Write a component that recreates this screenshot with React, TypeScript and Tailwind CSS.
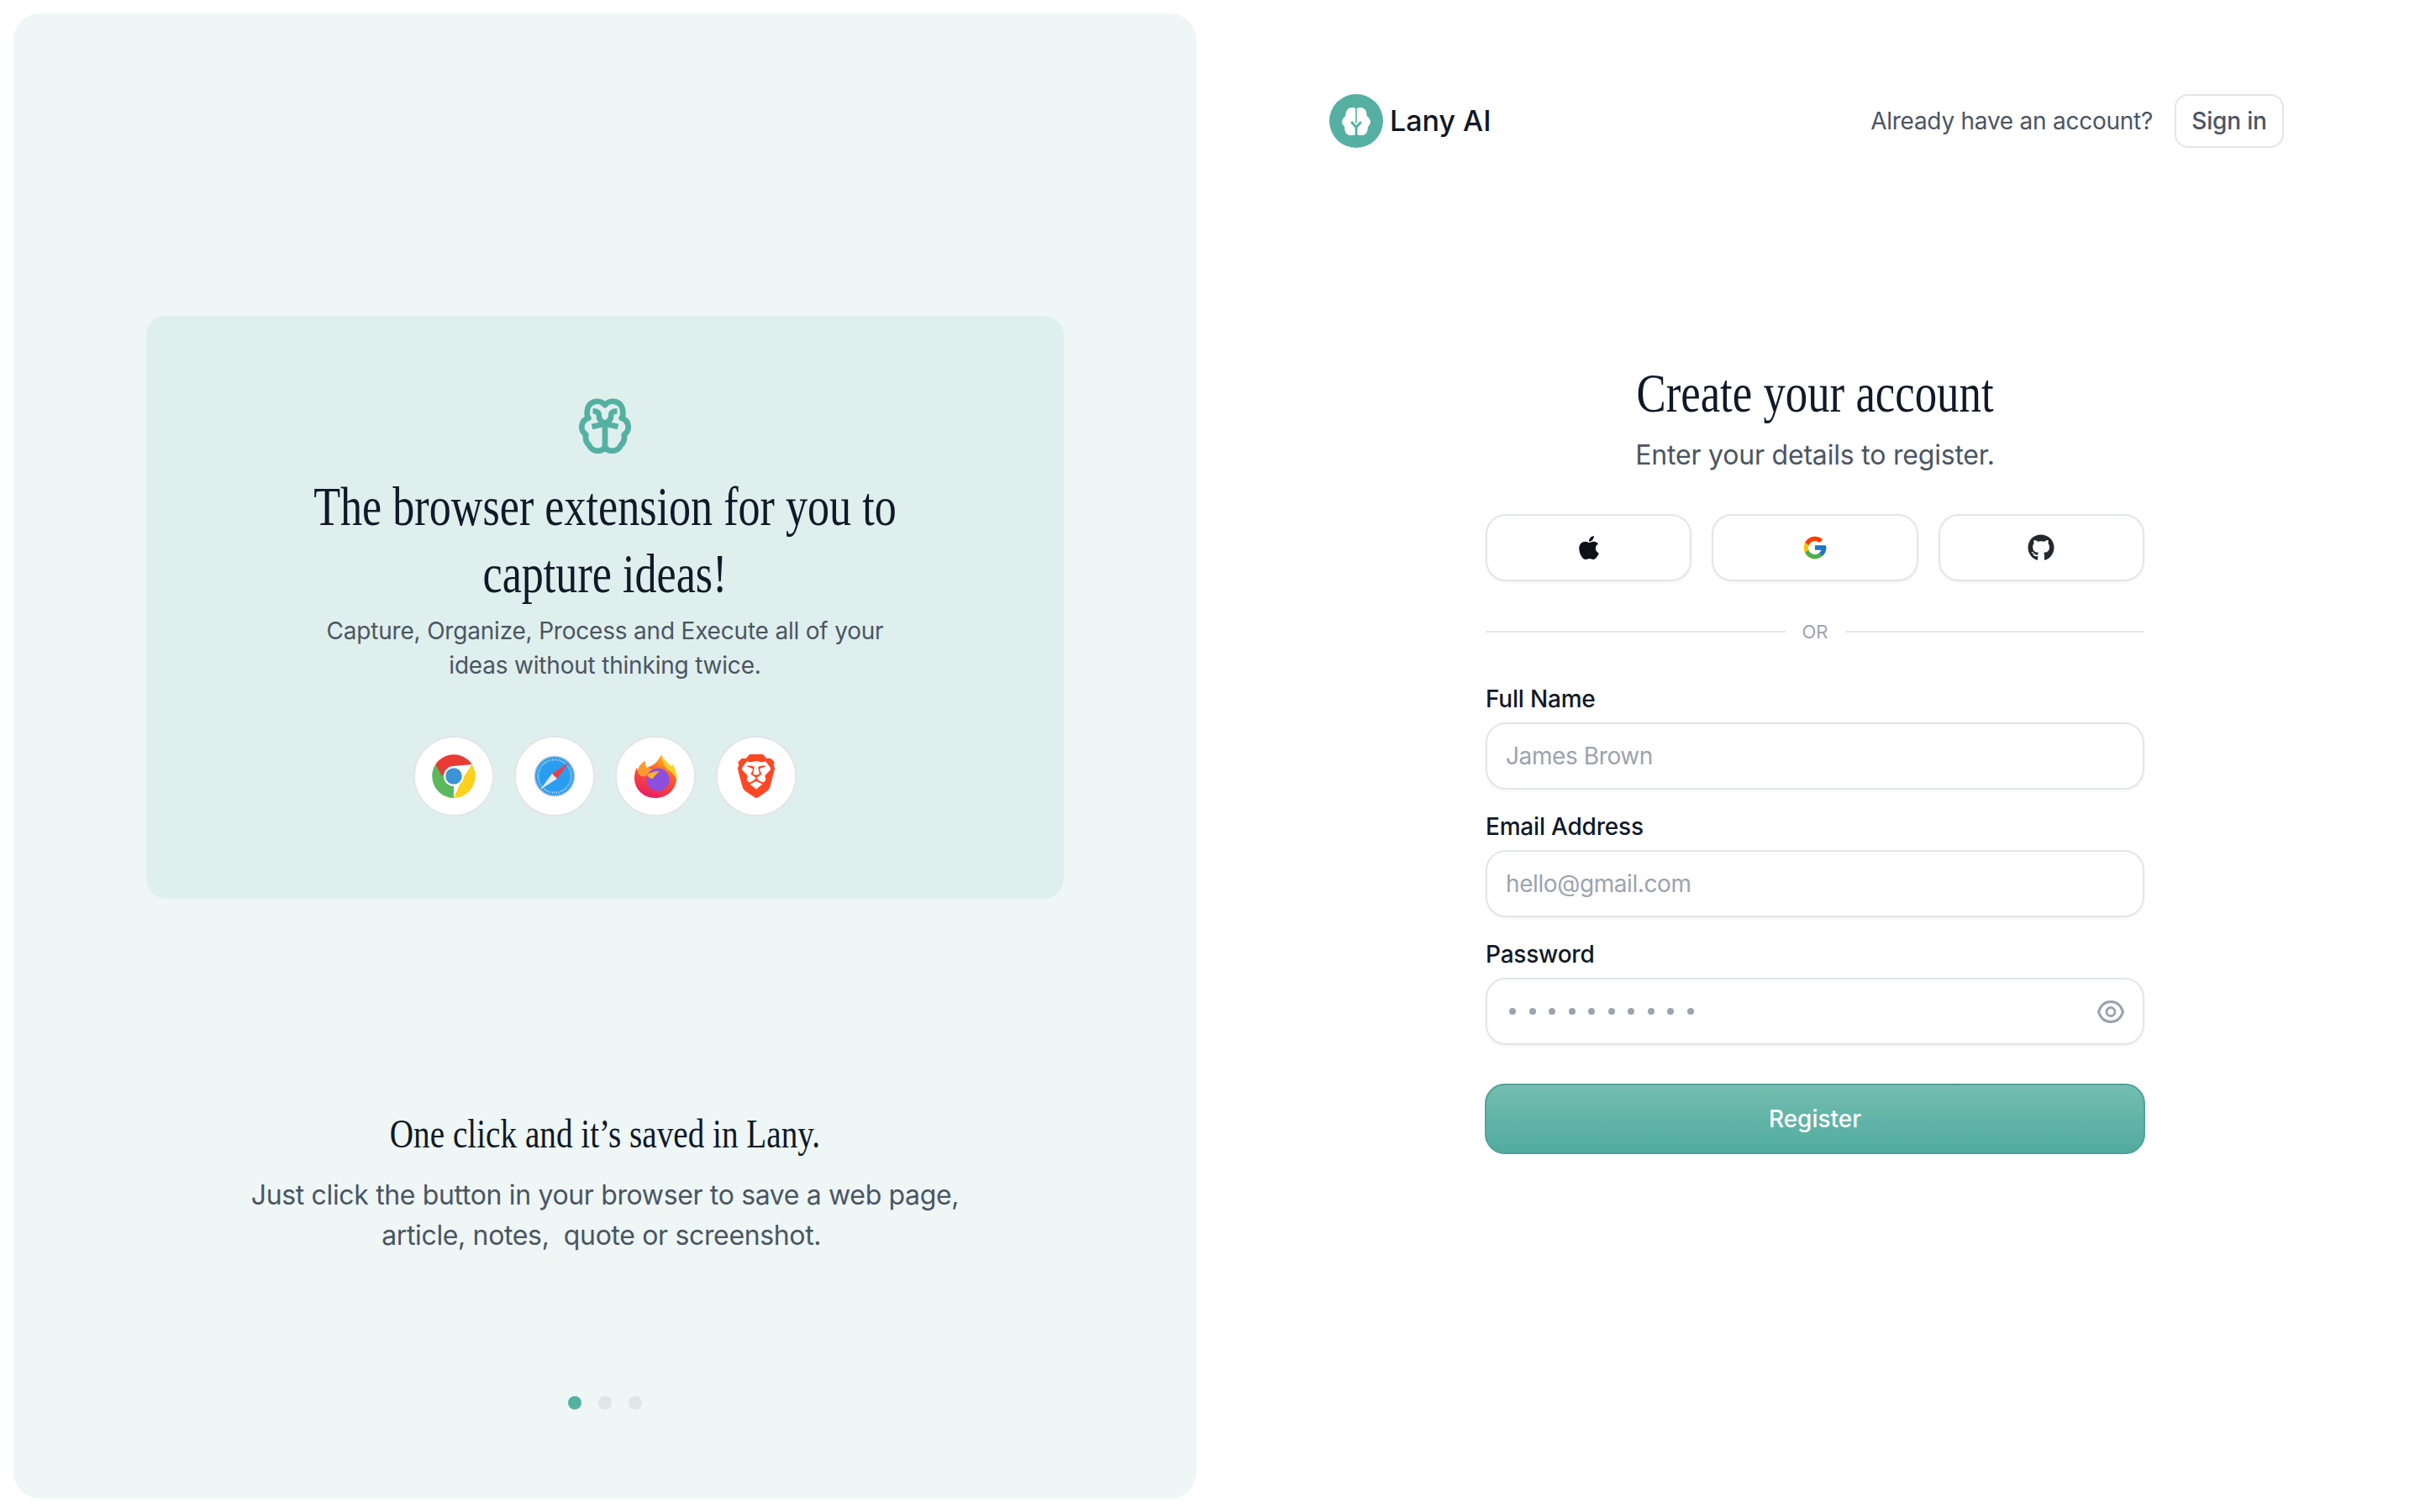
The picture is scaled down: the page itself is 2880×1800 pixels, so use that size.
import { FaApple, FaGithub } from 'react-icons/fa'
import { FcGoogle } from 'react-icons/fc'
import { SiBrave } from 'react-icons/si'

const serif = "font-['Liberation_Serif',serif]"

const BrainOutline = () => (
    <svg width="66" height="66" viewBox="0 0 64 64" fill="none" stroke="#55b0a2" strokeWidth="6.500" strokeLinecap="butt" strokeLinejoin="round">
        <path d="M32 8A11.500 11.500 0 0 0 11.500 15.500Q10.500 20 13 23A10.500 10.500 0 0 0 10 42Q8.500 50 13.500 54A11 11 0 0 0 32 57A11 11 0 0 0 50.500 54Q55.500 50 54 42A10.500 10.500 0 0 0 51 23Q53.500 20 52.500 15.500A11.500 11.500 0 0 0 32 8Z" />
        <path d="M32 57V28" />
        <path d="M32 29C27 27 25 24 25 20C25 16 23 15 18 15" />
        <path d="M32 29C37 27 39 24 39 20C39 16 41 15 46 15" />
        <path d="M32 29.500L17 33M32 29.500L47 33" />
    </svg>
)

const LogoMark = () => (
    <div className="flex h-16 w-16 items-center justify-center rounded-full bg-[#55b0a2]">
        <svg width="34" height="35" viewBox="0 0 64 64" fill="#ffffff">
            <path d="M32 4C28 0 16 -1 12 6C8 10 9 16 8 20C3 24 0 28 0 33C0 38 4 42 6 45C6 52 8 62 18 63C24 64 29 62 32 60C35 62 40 64 46 63C56 62 58 52 58 45C60 42 64 38 64 33C64 28 61 24 56 20C55 16 56 10 52 6C48 -1 36 0 32 4Z" />
            <path d="M32 64V45L21 33M32 45L43 33" fill="none" stroke="#55b0a2" strokeWidth="5.500" />
            <path d="M32 2V36" fill="none" stroke="#55b0a2" strokeWidth="3" />
        </svg>
    </div>
)

const ChromeIcon = () => (
    <svg width="52" height="52" viewBox="0 0 48 48">
        <path d="M24 24L24 48A24 24 0 0 1 4 11Z" fill="#5cb85c" />
        <path d="M44 11A24 24 0 0 1 24 48L33 28Z" fill="#fdd21c" />
        <path d="M4 11A24 24 0 0 1 44 11L24 13L11 24Z" fill="#ea3a35" />
        <circle cx="24" cy="24" r="11" fill="#ffffff" />
        <circle cx="24" cy="24" r="9" fill="#3b94d6" />
    </svg>
)

const SafariIcon = () => {
    const ticks = Array.from({ length: 48 }, (_, i) => i * 7.5)
    return (
        <svg width="50" height="50" viewBox="0 0 50 50">
            <circle cx="25" cy="25" r="24.500" fill="#c9ced3" />
            <circle cx="25" cy="25" r="23" fill="#2a9df0" />
            {ticks.map((deg) => (
                <rect key={deg} x="24.600" y="4" width="0.800" height="2.500" fill="#d7ecf7" transform={`rotate(${deg} 25 25)`} />
            ))}
            <path d="M42 9L28 28L22 22Z" fill="#ea3d45" />
            <path d="M8 41L22 22L28 28Z" fill="#e9eaec" />
        </svg>
    )
}

const FirefoxIcon = () => (
    <svg width="52" height="54" viewBox="0 0 52 54">
        <defs>
            <linearGradient id="ff-body" x1="0.800" y1="0" x2="0.400" y2="1">
                <stop offset="0" stopColor="#ffc61e" />
                <stop offset="0.450" stopColor="#ff5b2c" />
                <stop offset="1" stopColor="#e91e63" />
            </linearGradient>
        </defs>
        <path d="M33 1C35 8 41 10 45 16L46 13C50 19 52 25 51 31C50 44 39 53 26 53C12 53 1 43 1 29C1 25 2 20 4 17L5 21C6 15 10 11 14 9C13 13 14 16 16 17C20 15 27 14 33 1Z" fill="url(#ff-body)" />
        <path d="M33 1C35 8 41 10 45 16L46 13C50 19 52 25 51 31C49 27 47 23 42 20C38 17 34 12 33 1Z" fill="#ffd02a" />
        <path d="M5 21C6 15 10 11 14 9C13 13 14 16 16 17C19 17 22 19 24 20C19 20 17 24 15 27C10 28 6 27 5 21Z" fill="#ff9a2e" />
        <circle cx="29" cy="31" r="13.500" fill="#8b4fe0" />
        <path d="M16 25C20 23 25 21 31 21C28 24 25 26 23 30C20 30 17 28 16 25Z" fill="#ffb52b" />
    </svg>
)

const EyeIcon = () => (
    <svg width="32" height="27" viewBox="0 0 32 27" fill="none" stroke="#9ca3af" strokeWidth="3">
        <path d="M1.500 13.500C4 6 9 1.500 16 1.500S28 6 30.500 13.500C28 21 23 25.500 16 25.500S4 21 1.500 13.500Z" />
        <circle cx="16" cy="13.500" r="5" />
    </svg>
)

const SocialButton = ({ children }: { children: React.ReactNode }) => (
    <button className="flex h-20 flex-1 items-center justify-center rounded-3xl border-2 border-[#e2e5ea] bg-white shadow-[0_2px_4px_rgba(16,24,40,0.04)]">
        {children}
    </button>
)

const Field = ({ label, placeholder }: { label: string, placeholder: string }) => (
    <label className="flex flex-col gap-2">
        <span className="text-[28px] font-medium leading-10 tracking-[-0.2px] text-[#111827]">{label}</span>
        <input
            readOnly
            placeholder={placeholder}
            className="h-20 rounded-3xl border-2 border-[#e2e5ea] bg-white px-[22px] text-[28px] tracking-[-0.4px] shadow-[0_2px_4px_rgba(16,24,40,0.04)] outline-none placeholder:text-[#9ca3af]"
        />
    </label>
)

export default function App() {
    return (
        <div className="flex h-[1800px] w-[2880px] bg-white font-['Inter',sans-serif]">
            {/* Left panel */}
            <div className="m-4 flex h-[1768px] w-[1408px] shrink-0 flex-col items-center rounded-[32px] bg-[#eef7f5] pt-[360px]">
                <div className="flex h-[694px] w-[1092px] flex-col items-center rounded-3xl bg-[#dfefed] pt-[98px]">
                    <BrainOutline />
                    <h2 className={`mt-[23px] w-[1000px] origin-center scale-x-[0.79] text-center text-[66px] leading-[80px] text-[#111827] ${serif}`}>
                        The browser extension for you to<br />capture ideas!
                    </h2>
                    <p className="mt-[8px] text-center text-[28px] leading-[41px] tracking-[-0.2px] text-[#4b5563]">
                        Capture, Organize, Process and Execute all of your<br />ideas without thinking twice.
                    </p>
                    <div className="mt-[63px] flex gap-6">
                        <div className="flex h-24 w-24 items-center justify-center rounded-full border-2 border-[#e2e5ea] bg-white"><ChromeIcon /></div>
                        <div className="flex h-24 w-24 items-center justify-center rounded-full border-2 border-[#e2e5ea] bg-white"><SafariIcon /></div>
                        <div className="flex h-24 w-24 items-center justify-center rounded-full border-2 border-[#e2e5ea] bg-white"><FirefoxIcon /></div>
                        <div className="flex h-24 w-24 items-center justify-center rounded-full border-2 border-[#e2e5ea] bg-white"><SiBrave size={52} color="#ff4724" /></div>
                    </div>
                </div>

                <h3 className={`mt-[248px] w-[800px] scale-x-[0.8] text-center text-[49px] leading-[64px] text-[#111827] ${serif}`}>
                    One click and it’s saved in Lany.
                </h3>
                <p className="mt-[17px] text-center text-[32px] leading-[48px] tracking-[-0.35px] whitespace-pre-wrap text-[#4b5563]">
                    Just click the button in your browser to save a web page,<br />article, notes,  quote or screenshot.{'\u00a0'}
                </p>

                <div className="mt-[167px] flex gap-5">
                    <span className="h-4 w-4 rounded-full bg-[#55b0a2]" />
                    <span className="h-4 w-4 rounded-full bg-[#e1e4e9]" />
                    <span className="h-4 w-4 rounded-full bg-[#e1e4e9]" />
                </div>
            </div>

            {/* Right side */}
            <div className="flex flex-1 flex-col">
                <header className="flex items-center justify-between pt-[112px] pl-[142px] pr-[162px]">
                    <div className="flex items-center gap-2">
                        <LogoMark />
                        <span className="text-[34px] font-medium leading-none text-[#111827]">Lany AI</span>
                    </div>
                    <div className="flex items-center gap-[26px]">
                        <span className="text-[28px] tracking-[-0.25px] text-[#4b5563]">Already have an account?</span>
                        <button className="flex h-16 w-[130px] items-center justify-center rounded-2xl border-2 border-[#e2e5ea] bg-white text-[28px] font-medium tracking-[-0.2px] text-[#4b5563]">
                            Sign in
                        </button>
                    </div>
                </header>

                <main className="mx-auto mt-[252px] flex w-[784px] flex-col">
                    <h1 className={`scale-x-[0.8] text-center text-[66px] leading-[80px] text-[#111827] ${serif}`}>Create your account</h1>
                    <p className="mt-[10px] text-center text-[32px] leading-[48px] tracking-[-0.2px] text-[#4b5563]">Enter your details to register.</p>

                    <div className="mt-[46px] flex gap-6">
                        <SocialButton><FaApple size={32} color="#0d1117" /></SocialButton>
                        <SocialButton><FcGoogle size={32} /></SocialButton>
                        <SocialButton><FaGithub size={32} color="#24292f" /></SocialButton>
                    </div>

                    <div className="mt-[40px] flex items-center gap-5">
                        <div className="h-[2px] flex-1 bg-[#e2e5ea]" />
                        <span className="text-[22px] leading-[40px] text-[#9ca3af]">OR</span>
                        <div className="h-[2px] flex-1 bg-[#e2e5ea]" />
                    </div>

                    <div className="mt-[40px] flex flex-col gap-[24px]">
                        <Field label="Full Name" placeholder="James Brown" />
                        <Field label="Email Address" placeholder="hello@gmail.com" />
                        <div className="flex flex-col gap-2">
                            <span className="text-[28px] font-medium leading-10 tracking-[-0.2px] text-[#111827]">Password</span>
                            <div className="flex h-20 items-center justify-between rounded-3xl border-2 border-[#e2e5ea] bg-white pl-[26px] pr-[22px] shadow-[0_2px_4px_rgba(16,24,40,0.04)]">
                                <div className="flex gap-[15.500px]">
                                    {Array.from({ length: 10 }, (_, i) => (
                                        <span key={i} className="h-2 w-2 rounded-full bg-[#9ca3af]" />
                                    ))}
                                </div>
                                <EyeIcon />
                            </div>
                        </div>
                    </div>

                    <button className="mt-[46px] -mx-[1px] flex h-[84px] items-center justify-center rounded-3xl border-2 border-[#4fa497] bg-gradient-to-b from-[#74bdb1] to-[#51ab9f] text-[28px] font-medium text-white">
                        Register
                    </button>
                </main>
            </div>
        </div>
    )
}
